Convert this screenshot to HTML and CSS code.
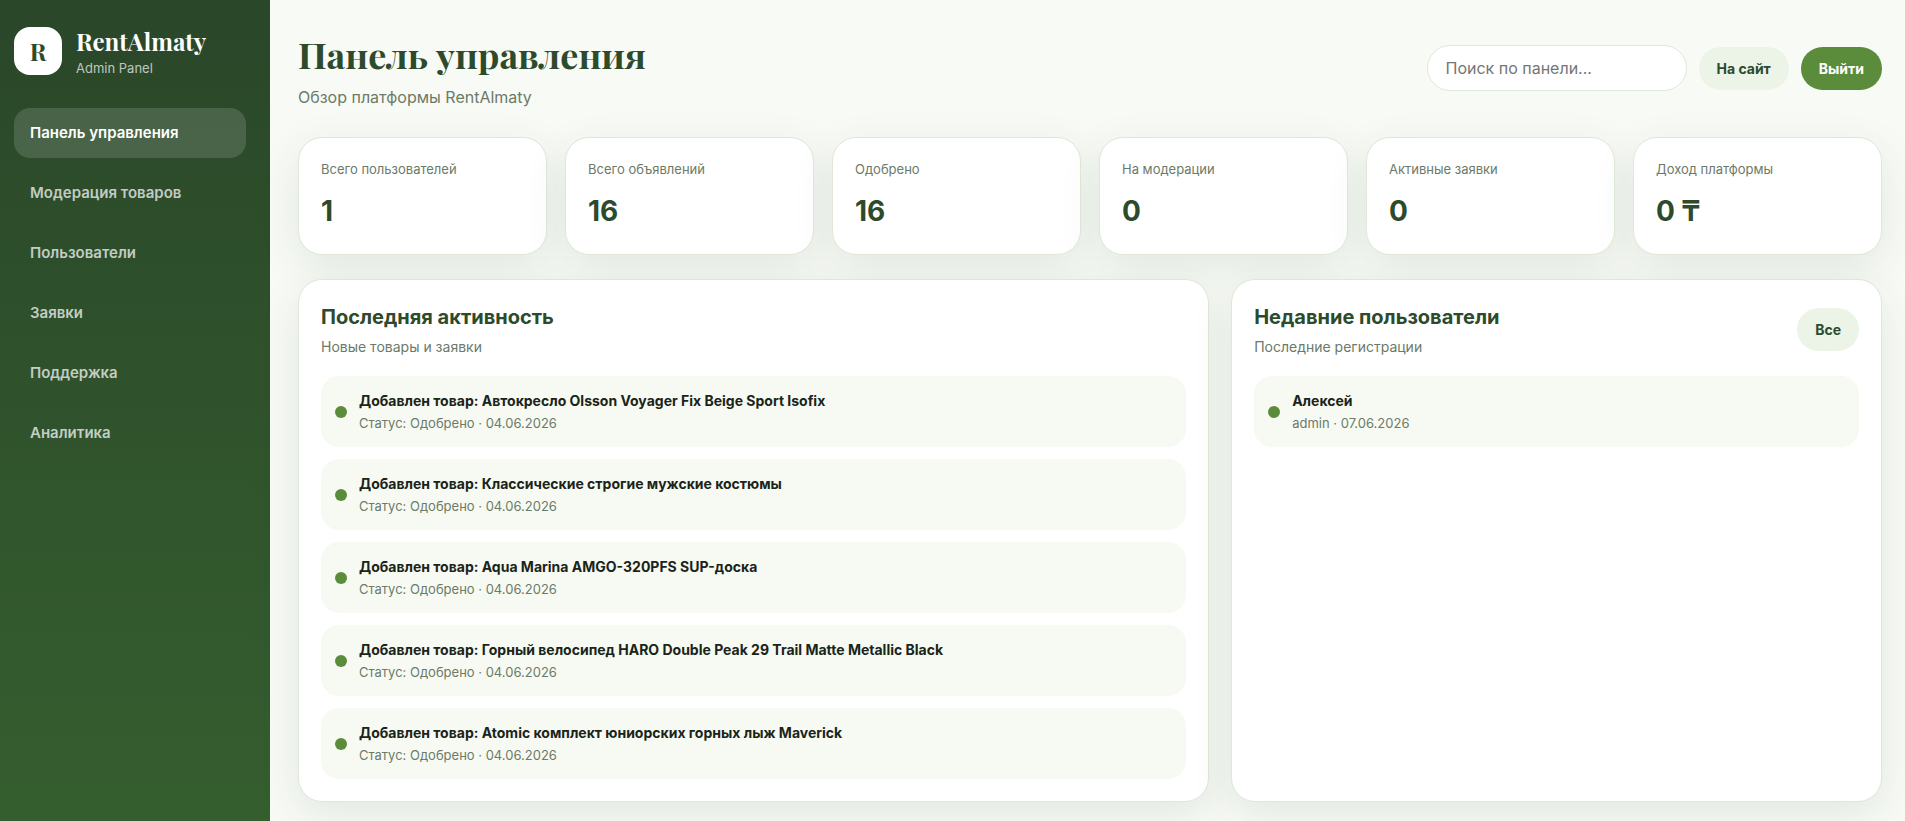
FILE: index.html
```html
<!DOCTYPE html>
<html lang="ru">
<head>
<meta charset="utf-8">
<title>RentAlmaty Admin</title>
<link rel="stylesheet" href="styles.css">
</head>
<body>
<div class="layout">
  <aside class="sidebar">
    <div class="brand">
      <div class="brand-mark">R</div>
      <div>
        <div class="brand-name">RentAlmaty</div>
        <div class="brand-sub">Admin Panel</div>
      </div>
    </div>
    <nav class="nav">
      <a class="nav-link active" href="#">Панель управления</a>
      <a class="nav-link" href="#">Модерация товаров</a>
      <a class="nav-link" href="#">Пользователи</a>
      <a class="nav-link" href="#">Заявки</a>
      <a class="nav-link" href="#">Поддержка</a>
      <a class="nav-link" href="#">Аналитика</a>
    </nav>
  </aside>
  <main class="main">
    <header class="topbar">
      <div>
        <h1 class="page-title">Панель управления</h1>
        <p class="page-sub">Обзор платформы RentAlmaty</p>
      </div>
      <div class="actions">
        <input class="search" type="search" placeholder="Поиск по панели..." aria-label="Поиск по панели">
        <a class="btn btn-light" href="#">На сайт</a>
        <button class="btn btn-primary" type="button">Выйти</button>
      </div>
    </header>
    <section class="stats">
      <article class="stat"><span class="stat-label">Всего пользователей</span><strong class="stat-value">1</strong></article>
      <article class="stat"><span class="stat-label">Всего объявлений</span><strong class="stat-value">16</strong></article>
      <article class="stat"><span class="stat-label">Одобрено</span><strong class="stat-value">16</strong></article>
      <article class="stat"><span class="stat-label">На модерации</span><strong class="stat-value">0</strong></article>
      <article class="stat"><span class="stat-label">Активные заявки</span><strong class="stat-value">0</strong></article>
      <article class="stat"><span class="stat-label">Доход платформы</span><strong class="stat-value">0 ₸</strong></article>
    </section>
    <section class="panels">
      <article class="panel">
        <div class="panel-head">
          <div>
            <h2 class="panel-title">Последняя активность</h2>
            <p class="panel-sub">Новые товары и заявки</p>
          </div>
        </div>
        <ul class="feed">
          <li class="item"><span class="dot"></span><div><div class="item-title">Добавлен товар: Автокресло Olsson Voyager Fix Beige Sport Isofix</div><div class="item-meta">Статус: Одобрено · 04.06.2026</div></div></li>
          <li class="item"><span class="dot"></span><div><div class="item-title">Добавлен товар: Классические строгие мужские костюмы</div><div class="item-meta">Статус: Одобрено · 04.06.2026</div></div></li>
          <li class="item"><span class="dot"></span><div><div class="item-title">Добавлен товар: Aqua Marina AMGO-320PFS SUP-доска</div><div class="item-meta">Статус: Одобрено · 04.06.2026</div></div></li>
          <li class="item"><span class="dot"></span><div><div class="item-title">Добавлен товар: Горный велосипед HARO Double Peak 29 Trail Matte Metallic Black</div><div class="item-meta">Статус: Одобрено · 04.06.2026</div></div></li>
          <li class="item"><span class="dot"></span><div><div class="item-title">Добавлен товар: Atomic комплект юниорских горных лыж Maverick</div><div class="item-meta">Статус: Одобрено · 04.06.2026</div></div></li>
        </ul>
      </article>
      <article class="panel">
        <div class="panel-head">
          <div>
            <h2 class="panel-title">Недавние пользователи</h2>
            <p class="panel-sub">Последние регистрации</p>
          </div>
          <a class="btn btn-light" href="#">Все</a>
        </div>
        <ul class="feed">
          <li class="item"><span class="dot"></span><div><div class="item-title">Алексей</div><div class="item-meta">admin · 07.06.2026</div></div></li>
        </ul>
      </article>
    </section>
  </main>
</div>
</body>
</html>
```

FILE: styles.css
```css
* { box-sizing: border-box; margin: 0; padding: 0; }

body {
  font-family: Inter, "Liberation Sans", sans-serif;
  font-size: 16px;
  color: #1a2419;
  background: #f8faf5;
}

.layout {
  display: grid;
  grid-template-columns: 270px minmax(0, 1fr);
  min-height: 100vh;
}

.sidebar {
  padding: 24px 24px 24px 14px;
  background: linear-gradient(180deg, #2a4729, #355e2f);
  color: #fff;
}

.brand { display: flex; align-items: center; gap: 14px; margin-bottom: 30px; }

.brand-mark {
  display: grid;
  place-items: center;
  width: 48px;
  height: 48px;
  border-radius: 16px;
  background: #fff;
  color: #2d4a2d;
  font: 700 24px/1 "Playfair Display", "Liberation Serif", serif;
}

.brand-name { font: 700 24px/34px "Playfair Display", "Liberation Serif", serif; }
.brand-sub { font-size: 13px; line-height: 20px; color: rgba(255, 255, 255, .7); }

.nav { display: grid; gap: 10px; }

.nav-link {
  padding: 13px 16px;
  border-radius: 16px;
  color: rgba(255, 255, 255, .72);
  font-size: 15px;
  font-weight: 600;
  line-height: 24px;
  text-decoration: none;
}
.nav-link.active { background: rgba(255, 255, 255, .14); color: #fff; }

.main { padding: 28px 23px 18px 28px; }

.topbar {
  display: flex;
  align-items: center;
  justify-content: space-between;
  gap: 20px;
  margin-bottom: 29px;
}

.page-title {
  font: 700 36px/52px "Playfair Display", "Liberation Serif", serif;
  color: #2d4a2d;
}
.page-sub { margin-top: 6px; line-height: 22px; color: #6b7a69; }

.actions { display: flex; align-items: center; gap: 12px; }

.search {
  width: 260px;
  height: 46px;
  padding: 0 18px;
  border: 1px solid #dfe8d8;
  border-radius: 23px;
  background: #fff;
  color: #1a2419;
  font: 400 16px/20px Inter, "Liberation Sans", sans-serif;
}
.search::placeholder { color: #757575; }

.btn {
  padding: 13px 18px;
  border: 0;
  border-radius: 22px;
  font: 700 14px/17px Inter, "Liberation Sans", sans-serif;
  text-decoration: none;
}
.btn-light { background: #ecf4e8; color: #2d4a2d; }
.btn-primary { background: #5a8c3c; color: #fff; }

.stats {
  display: grid;
  grid-template-columns: repeat(6, minmax(0, 1fr));
  gap: 18px;
  margin-bottom: 24px;
}

.stat, .panel {
  border: 1px solid #dfe8d8;
  border-radius: 24px;
  background: #fff;
  box-shadow: 0 12px 40px rgba(30, 80, 60, .1);
}

.stat { display: grid; gap: 12px; padding: 22px; }
.stat-label { font-size: 13px; line-height: 18px; color: #6b7a69; }
.stat-value { font-size: 28px; line-height: 42px; color: #2d4a2d; }

.panels {
  display: grid;
  grid-template-columns: minmax(0, 14fr) minmax(0, 10fr);
  gap: 22px;
}

.panel { padding: 22px; }

.panel-head {
  display: flex;
  align-items: center;
  justify-content: space-between;
  margin-bottom: 19px;
}
.panel-title { font-size: 20px; line-height: 30px; color: #2d4a2d; }
.panel-sub { margin-top: 5px; font-size: 14px; line-height: 20px; color: #6b7a69; }

.feed { display: grid; gap: 12px; list-style: none; }

.item {
  display: flex;
  align-items: center;
  gap: 12px;
  padding: 14px;
  border-radius: 18px;
  background: #f7faf3;
}
.dot { flex: none; width: 12px; height: 12px; border-radius: 50%; background: #5a8c3c; }
.item-title { font-size: 14px; font-weight: 700; line-height: 21px; }
.item-meta { margin-top: 2px; font-size: 13px; line-height: 20px; color: #6b7a69; }
```
